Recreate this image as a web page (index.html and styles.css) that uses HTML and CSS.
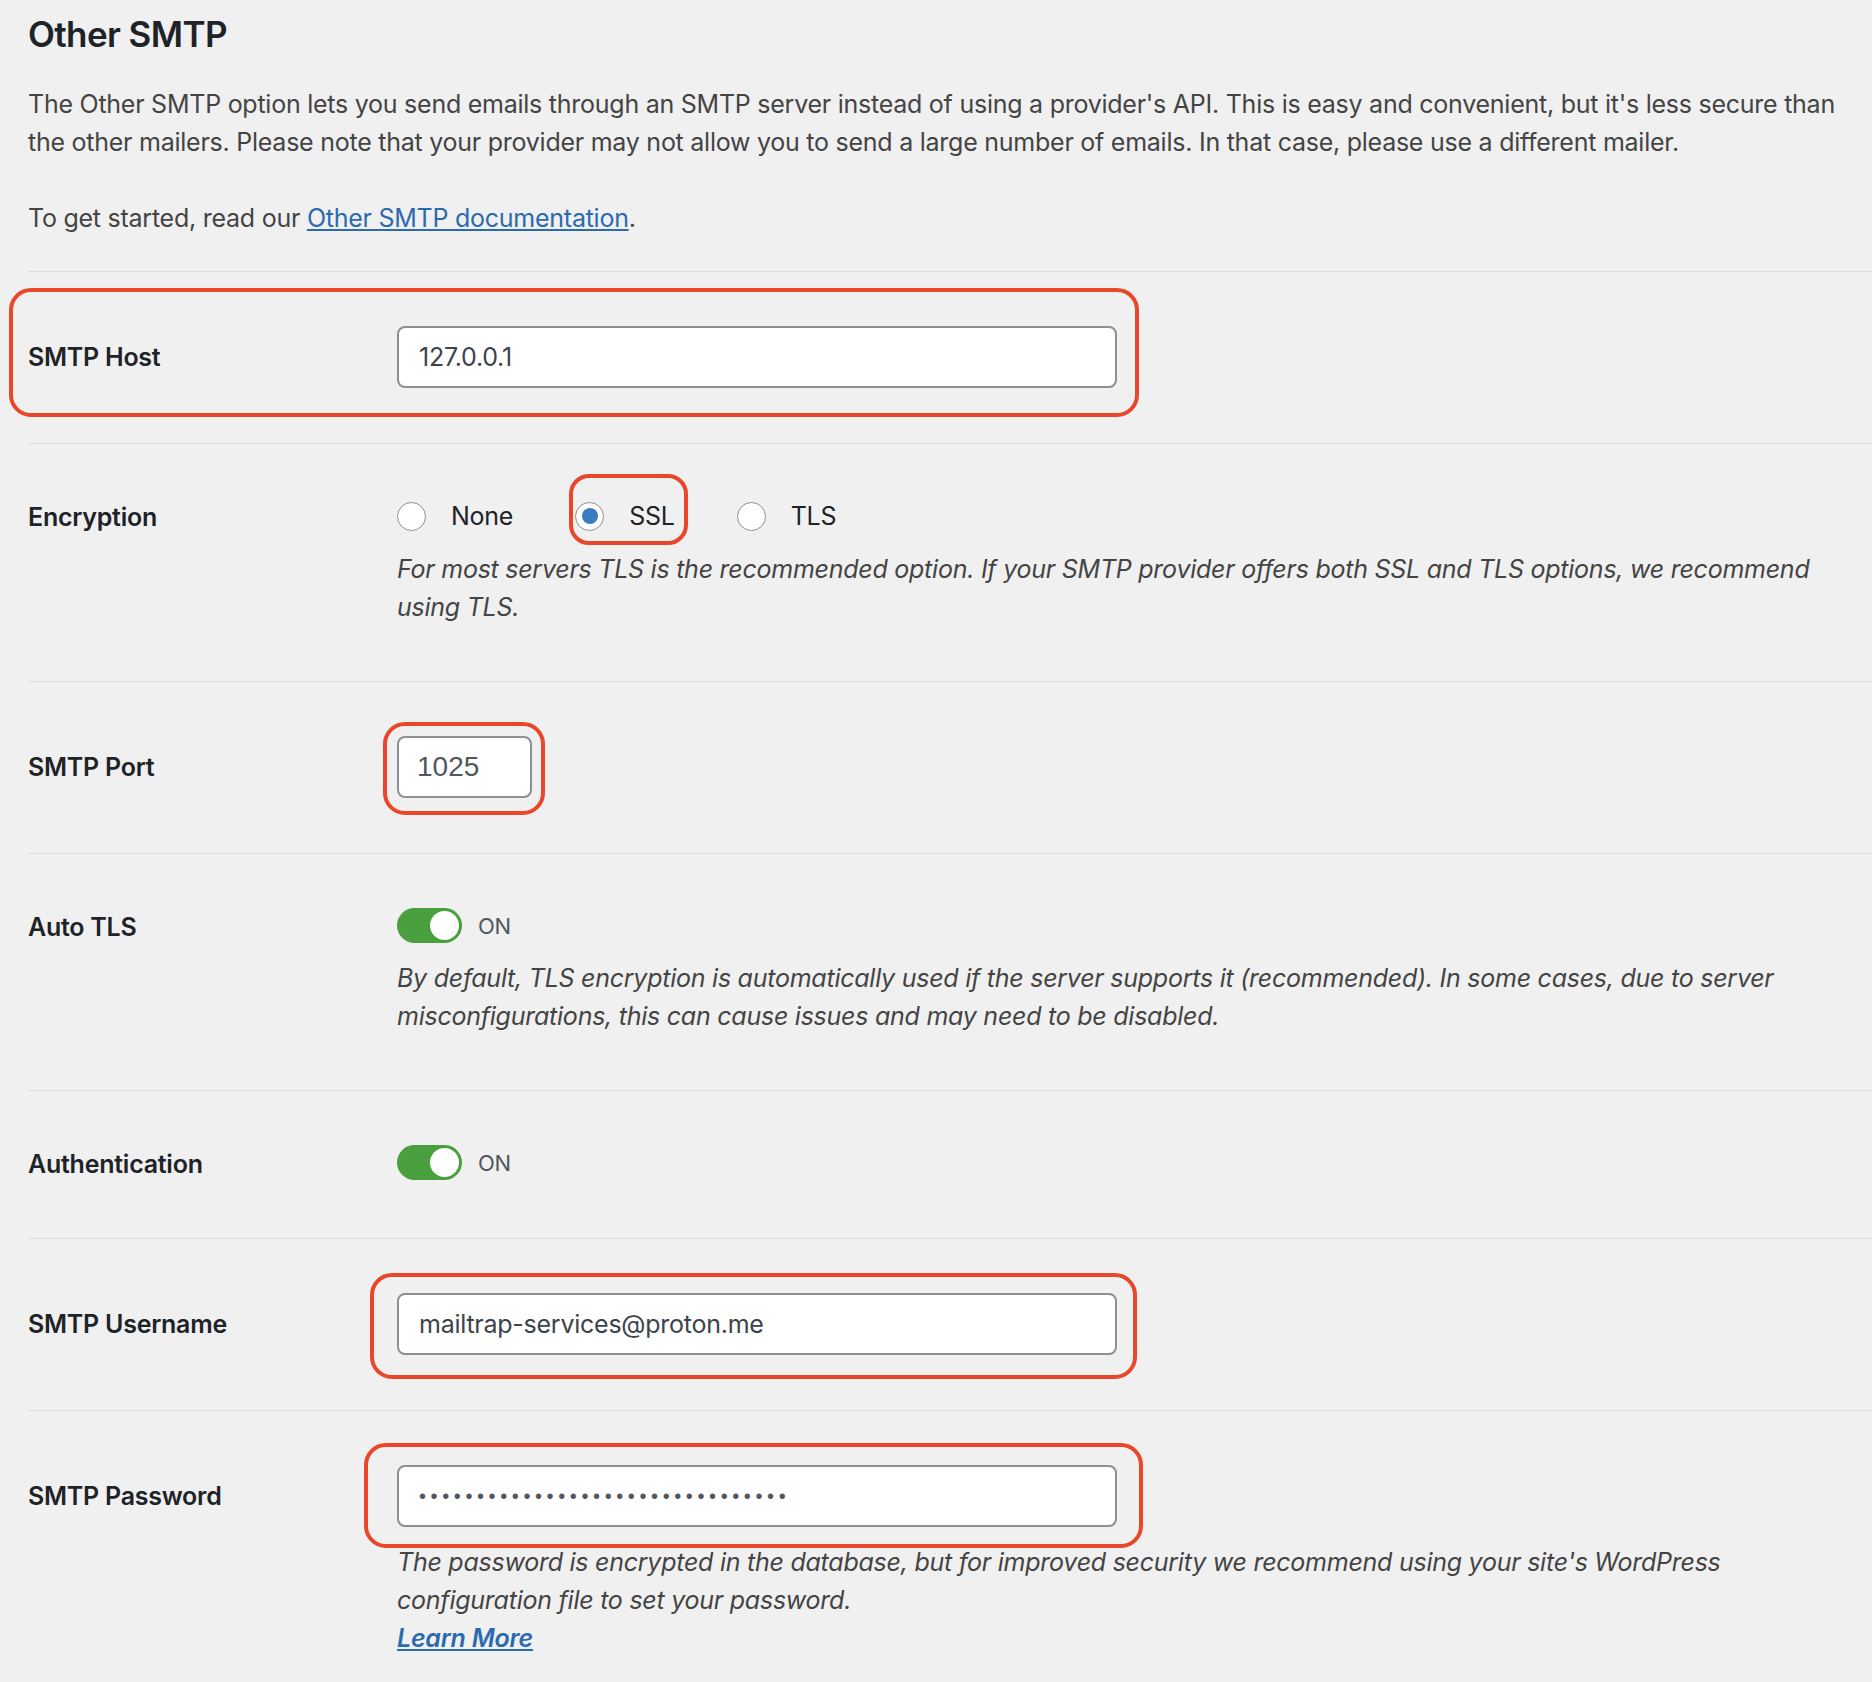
FILE: index.html
```html
<!DOCTYPE html>
<html lang="en">
<head>
  <meta charset="UTF-8">
  <title>Other SMTP settings</title>
  <link rel="stylesheet" href="styles.css">
</head>
<body>
  <div class="page">
    <!-- mailer intro -->
    <div class="mailer-intro">
      <h2 class="section-title">Other SMTP</h2>
      <p class="section-text">The Other SMTP option lets you send emails through an SMTP server instead of using a provider's API. This is easy and convenient, but it's less secure than the other mailers. Please note that your provider may not allow you to send a large number of emails. In that case, please use a different mailer.</p>
      <p class="section-text">To get started, read our <a href="#">Other SMTP documentation</a>.</p>
    </div>

    <!-- settings rows -->
    <div class="settings">
      <div class="setting-row">
        <label class="setting-label" for="smtp-host">SMTP Host</label>
        <div class="setting-field">
          <div class="control-wrap">
            <input class="text-input" id="smtp-host" type="text" value="127.0.0.1">
            <span class="mark mark--host"></span>
          </div>
        </div>
      </div>

      <div class="setting-row setting-row--radio">
        <span class="setting-label">Encryption</span>
        <div class="setting-field">
          <div class="radio-line">
            <label class="radio-option"><input class="radio" type="radio" name="encryption" value="none">None</label>
            <label class="radio-option"><input class="radio" type="radio" name="encryption" value="ssl" checked>SSL<span class="mark mark--ssl"></span></label>
            <label class="radio-option"><input class="radio" type="radio" name="encryption" value="tls">TLS</label>
          </div>
          <p class="desc">For most servers TLS is the recommended option. If your SMTP provider offers both SSL and TLS options, we recommend using TLS.</p>
        </div>
      </div>

      <div class="setting-row">
        <label class="setting-label" for="smtp-port">SMTP Port</label>
        <div class="setting-field">
          <div class="control-wrap">
            <input class="text-input text-input--port" id="smtp-port" type="text" inputmode="numeric" value="1025">
            <span class="mark mark--port"></span>
          </div>
        </div>
      </div>

      <div class="setting-row setting-row--toggle">
        <span class="setting-label">Auto TLS</span>
        <div class="setting-field">
          <label class="toggle">
            <input type="checkbox" checked>
            <span class="toggle-track"><span class="toggle-knob"></span></span>
            <span class="toggle-state">ON</span>
          </label>
          <p class="desc">By default, TLS encryption is automatically used if the server supports it (recommended). In some cases, due to server misconfigurations, this can cause issues and may need to be disabled.</p>
        </div>
      </div>

      <div class="setting-row setting-row--toggle">
        <span class="setting-label">Authentication</span>
        <div class="setting-field">
          <label class="toggle">
            <input type="checkbox" checked>
            <span class="toggle-track"><span class="toggle-knob"></span></span>
            <span class="toggle-state">ON</span>
          </label>
        </div>
      </div>

      <div class="setting-row">
        <label class="setting-label" for="smtp-user">SMTP Username</label>
        <div class="setting-field">
          <div class="control-wrap">
            <input class="text-input" id="smtp-user" type="text" value="mailtrap-services@proton.me">
            <span class="mark mark--user"></span>
          </div>
        </div>
      </div>

      <div class="setting-row">
        <label class="setting-label" for="smtp-pass">SMTP Password</label>
        <div class="setting-field">
          <div class="control-wrap">
            <input class="text-input text-input--pass" id="smtp-pass" type="password" value="mailtrapservicespassword12345678">
            <span class="mark mark--pass"></span>
          </div>
          <p class="desc">The password is encrypted in the database, but for improved security we recommend using your site's WordPress configuration file to set your password.<br><a class="learn-more" href="#">Learn More</a></p>
        </div>
      </div>
    </div>
  </div>
</body>
</html>
```

FILE: styles.css
```css
body { margin: 0; background: #f0f0f1; color: #1d2327; font-family: Inter, "Liberation Sans", sans-serif; font-size: 25px; line-height: 38px; letter-spacing: -0.25px; }
a { color: #2c6aae; }
.page { padding: 12px 0 0 28px; }

/* intro */
.section-title { margin: 0 0 29px; font-size: 35px; line-height: 44px; font-weight: 600; letter-spacing: -0.6px; }
.section-text { margin: 0 20px 38px 0; color: #444; }
.section-text:last-child { margin-bottom: 34px; }

/* rows */
.setting-row { display: grid; grid-template-columns: 369px 1fr; border-top: 1px solid #dcdcde; padding: 54px 20px 55px 0; }
.setting-label { display: flex; align-items: center; align-self: start; min-height: 62px; font-weight: 600; }
.setting-row--radio .setting-label { min-height: 36px; }
.setting-row--toggle .setting-label { min-height: 35px; }
.desc { margin: 16px 0 0; font-style: italic; color: #444; }

/* inputs */
.control-wrap { position: relative; display: flex; width: max-content; }
.text-input { box-sizing: border-box; width: 720px; height: 62px; margin: 0; padding: 0 20px; border: 2px solid #8c8f94; border-radius: 8px; background: #fff; color: #3c434a; font: inherit; letter-spacing: -0.25px; }
.text-input--port { width: 135px; padding: 0 18px; font-family: "Liberation Sans", Arial, sans-serif; font-size: 28px; letter-spacing: 0; color: #50575e; }
.text-input--pass { font-family: "Liberation Sans", Arial, sans-serif; font-size: 20px; letter-spacing: 4.6px; color: #50575e; }

/* radios */
.radio-line { display: flex; align-items: center; height: 36px; }
.radio-option { position: relative; display: flex; align-items: center; gap: 25px; margin-right: 62px; }
.radio { appearance: none; display: grid; place-content: center; box-sizing: border-box; width: 29px; height: 29px; margin: 0; border: 1.5px solid #8c8f94; border-radius: 50%; background: #fff; }
.radio:checked::before { content: ""; width: 16px; height: 16px; border-radius: 50%; background: #3a7bc1; }

/* toggles */
.toggle { display: flex; align-items: center; gap: 16px; height: 35px; }
.toggle input { display: none; }
.toggle-track { box-sizing: border-box; display: flex; justify-content: flex-end; align-items: center; width: 65px; height: 35px; padding: 3px; border-radius: 18px; background: #4a9f3e; }
.toggle-knob { width: 29px; height: 29px; border-radius: 50%; background: #fff; }
.toggle-state { font-size: 22px; color: #50575e; }

.learn-more { font-weight: 600; }

/* red outlines drawn over fields */
.mark { position: absolute; border: 4px solid #e8472c; border-radius: 22px; pointer-events: none; }
.mark--host { top: -38px; bottom: -29px; left: -388px; right: -22px; }
.mark--port { top: -14px; bottom: -17px; left: -14px; right: -13px; }
.mark--ssl { top: -23px; bottom: -10px; left: -6px; right: -13px; border-radius: 20px; }
.mark--user { top: -20px; bottom: -24px; left: -27px; right: -20px; }
.mark--pass { top: -22px; bottom: -21px; left: -33px; right: -26px; }
```
